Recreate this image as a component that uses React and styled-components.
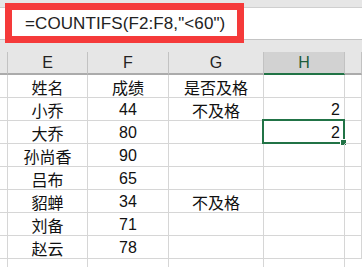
import { Fragment } from "react";
import styled, { createGlobalStyle } from "styled-components";

const GlobalStyle = createGlobalStyle`
  html, body {
    margin: 0;
    padding: 0;
    background: #ffffff;
    overflow: hidden;
  }
  body {
    font-family: "Liberation Sans", "Noto Sans CJK SC", sans-serif;
    color: #1a1a1a;
  }
`;

const Window = styled.div`
  position: relative;
  width: 362px;
  height: 267px;
  overflow: hidden;
  background: #ffffff;
`;

const TopStrip = styled.div`
  height: 7px;
  background: #e6e6e6;
  border-bottom: 1px solid #cfcfcf;
`;

const FormulaBar = styled.div`
  height: 31px;
  background: #ffffff;
  border-bottom: 1px solid #c4c4c4;
  display: flex;
  align-items: center;
  padding-left: 25px;
  font-size: 17px;
  color: #222222;
  letter-spacing: 0.1px;
`;

const Gap = styled.div`
  height: 12px;
  background: #e6e6e6;
`;

/* red marker frame drawn over the formula bar */
const Highlight = styled.div`
  position: absolute;
  left: 5px;
  top: 3px;
  width: 225px;
  height: 26px;
  border: 7px solid #f53a3a;
  pointer-events: none;
`;

const Sheet = styled.div`
  display: grid;
  grid-template-columns: 8px 80px 81px 95px 81px 1fr;
  grid-auto-rows: 23px;
`;

const ColHead = styled.div`
  height: 21px;
  background: ${(p) => (p.$active ? "#d2d2d2" : "#e6e6e6")};
  border-right: 1px solid #c2c2c2;
  border-bottom: ${(p) => (p.$active ? "2px solid #217346" : "2px solid #ababab")};
  display: flex;
  align-items: center;
  justify-content: center;
  font-size: 16px;
  color: ${(p) => (p.$active ? "#1d5c3a" : "#222222")};
  &:last-child {
    border-right: none;
  }
`;

const Cell = styled.div`
  position: relative;
  box-sizing: border-box;
  height: 23px;
  border-right: 1px solid #d6d6d6;
  border-bottom: 1px solid #d6d6d6;
  display: flex;
  align-items: center;
  justify-content: ${(p) => (p.$align === "right" ? "flex-end" : "center")};
  padding-right: ${(p) => (p.$align === "right" ? "4px" : "0")};
  padding-top: 1px;
  font-size: 16px;
  color: #111111;
  white-space: nowrap;
  &:last-child {
    border-right: none;
  }
`;

const Selection = styled.div`
  position: absolute;
  left: -2px;
  top: -2px;
  right: -1px;
  bottom: -1px;
  border: 2px solid #217346;
  pointer-events: none;
  &::after {
    content: "";
    position: absolute;
    right: -4px;
    bottom: -4px;
    width: 5px;
    height: 5px;
    background: #217346;
    border: 1px solid #ffffff;
  }
`;

const columns = ["", "E", "F", "G", "H", ""];

const rows = [
  ["姓名", "成绩", "是否及格", ""],
  ["小乔", "44", "不及格", "2"],
  ["大乔", "80", "", "2"],
  ["孙尚香", "90", "", ""],
  ["吕布", "65", "", ""],
  ["貂蝉", "34", "不及格", ""],
  ["刘备", "71", "", ""],
  ["赵云", "78", "", ""],
  ["", "", "", ""],
];

const App = () => {
  return (
    <>
      <GlobalStyle />
      <Window>
        <TopStrip />
        <FormulaBar>=COUNTIFS(F2:F8,"&lt;60")</FormulaBar>
        <Gap />
        <Highlight />
        <Sheet>
          {columns.map((c, i) => (
            <ColHead key={"h" + i} $active={c === "H"}>
              {c}
            </ColHead>
          ))}
          {rows.map((r, ri) => (
            <Fragment key={ri}>
              <Cell />
              <Cell>{r[0]}</Cell>
              <Cell>{r[1]}</Cell>
              <Cell>{r[2]}</Cell>
              <Cell $align="right">
                {r[3]}
                {ri === 2 && <Selection />}
              </Cell>
              <Cell />
            </Fragment>
          ))}
        </Sheet>
      </Window>
    </>
  );
};

export default App;
